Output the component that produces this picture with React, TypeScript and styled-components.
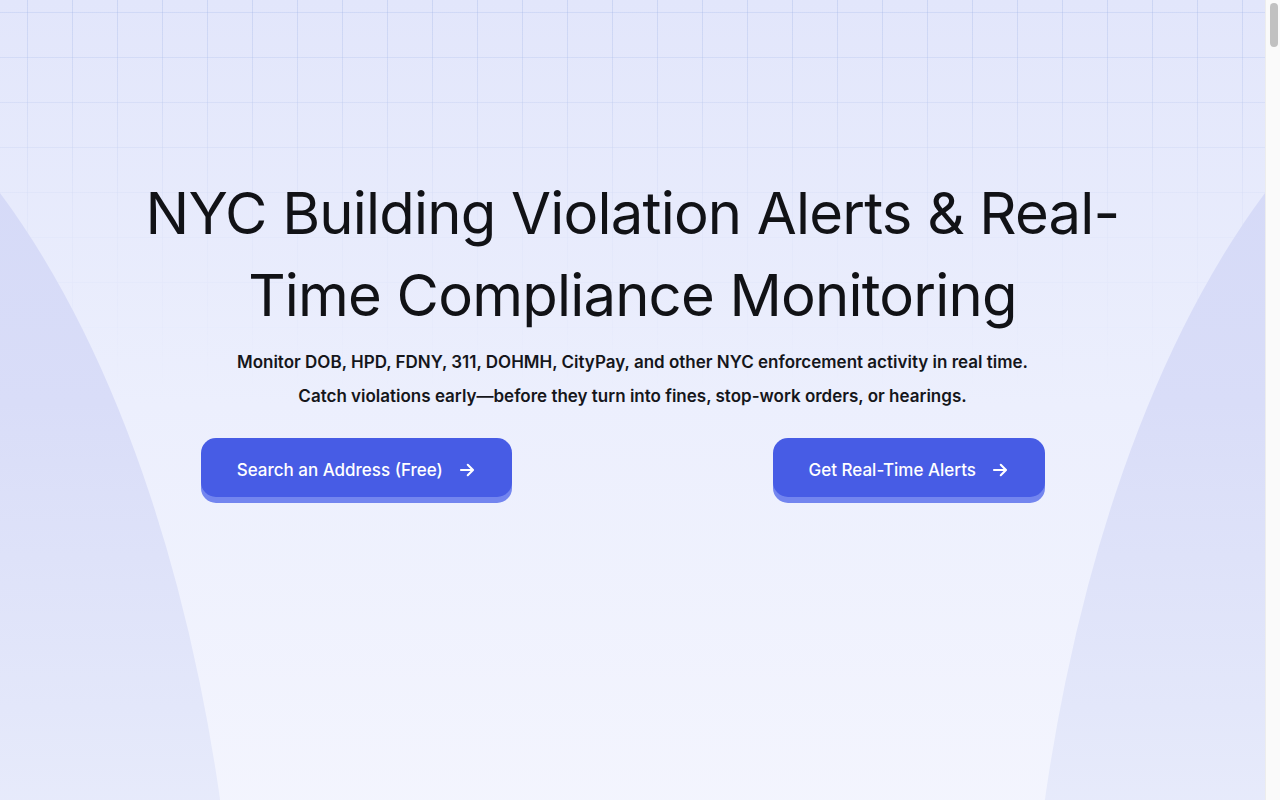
import React from 'react';
import styled, { createGlobalStyle } from 'styled-components';

const GlobalStyle = createGlobalStyle`
  html, body {
    margin: 0;
    padding: 0;
    height: 100%;
    overflow: hidden;
  }
  body {
    font-family: Inter, 'Liberation Sans', sans-serif;
    background: #f5f6fe;
    color: #111216;
  }
  * {
    box-sizing: border-box;
  }
`;

const ArrowIcon = () => (
  <svg width="18" height="18" viewBox="0 0 24 24" fill="none" stroke="currentColor" strokeWidth="2.8" strokeLinecap="round" strokeLinejoin="round">
    <path d="M4 12h15" />
    <path d="M13 5l7 7-7 7" />
  </svg>
);

export default function App() {
  return (
    <>
      <GlobalStyle />
      <Frame>
        <Page>
          <Hero>
            <GridLines />
            <Arc side="left" />
            <Arc side="right" />
            <HeroContent>
              <Title>
                NYC Building Violation Alerts &amp; Real-
                <br />
                Time Compliance Monitoring
              </Title>
              <Subtitle>
                Monitor DOB, HPD, FDNY, 311, DOHMH, CityPay, and other NYC enforcement activity in real time.
                <br />
                Catch violations early—before they turn into fines, stop-work orders, or hearings.
              </Subtitle>
              <Actions>
                <CtaButton>
                  Search an Address (Free)
                  <ArrowIcon />
                </CtaButton>
                <CtaButton>
                  Get Real-Time Alerts
                  <ArrowIcon />
                </CtaButton>
              </Actions>
            </HeroContent>
          </Hero>
        </Page>
        <ScrollTrack>
          <ScrollThumb />
        </ScrollTrack>
      </Frame>
    </>
  );
}

const Frame = styled.div`
  display: flex;
  width: 100vw;
  height: 100vh;
  overflow: hidden;
`;

const Page = styled.main`
  flex: 1;
  min-width: 0;
  height: 100%;
  overflow: hidden;
`;

// stands in for the browser's vertical scrollbar seen in the screenshot
const ScrollTrack = styled.div`
  flex: none;
  width: 15px;
  height: 100%;
  padding: 3px 3px 0 4px;
  background: #fafafa;
  border-left: 1px solid #ededed;
`;

const ScrollThumb = styled.div`
  width: 8px;
  height: 44px;
  border-radius: 4px;
  background: #c1c1c1;
`;

const Hero = styled.section`
  position: relative;
  overflow: hidden;
  min-height: 900px;
  background: linear-gradient(180deg, #e2e6fb 0%, #eceffd 45%, #f5f6fe 100%);
`;

const GridLines = styled.div`
  position: absolute;
  inset: 0 0 auto 0;
  height: 420px;
  pointer-events: none;
  background-image:
    linear-gradient(to right, rgba(165, 184, 232, 0.36) 1px, transparent 1px),
    linear-gradient(to bottom, rgba(165, 184, 232, 0.3) 1px, transparent 1px);
  background-size: 45px 45px;
  background-position: 27px 12px;
  -webkit-mask-image: linear-gradient(to bottom, #000 0, rgba(0, 0, 0, 0.7) 100px, rgba(0, 0, 0, 0.2) 220px, transparent 400px);
  mask-image: linear-gradient(to bottom, #000 0, rgba(0, 0, 0, 0.7) 100px, rgba(0, 0, 0, 0.2) 220px, transparent 400px);
`;

const Arc = styled.div<{ side: 'left' | 'right' }>`
  position: absolute;
  top: 10px;
  ${(p) => (p.side === 'left' ? 'left: -841px;' : 'right: -841px;')}
  width: 1082px;
  height: 2180px;
  border-radius: 50%;
  pointer-events: none;
  background: linear-gradient(180deg, #d3d8f7 0%, #d9ddf8 18%, #e3e7fa 32%, #eef1fd 45%);
`;

const HeroContent = styled.div`
  position: relative;
  z-index: 1;
  display: flex;
  flex-direction: column;
  align-items: center;
  padding: 172px 80px 0;
`;

const Title = styled.h1`
  margin: 0;
  font-family: Inter, 'Liberation Sans', sans-serif;
  font-weight: 400;
  font-size: 58px;
  line-height: 82px;
  letter-spacing: -0.8px;
  text-align: center;
  color: #111216;
`;

const Subtitle = styled.p`
  margin: 9px 0 0;
  font-family: Inter, 'Liberation Sans', sans-serif;
  font-weight: 600;
  font-size: 17px;
  line-height: 34px;
  letter-spacing: 0;
  text-align: center;
  color: #15161b;
`;

const Actions = styled.div`
  width: 100%;
  display: grid;
  grid-template-columns: 1fr 1fr;
  justify-items: center;
  margin-top: 25px;
`;

const CtaButton = styled.button`
  display: inline-flex;
  align-items: center;
  gap: 15px;
  height: 59px;
  padding: 5px 36px 0;
  border: none;
  border-radius: 15px;
  background: #475ce5;
  box-shadow: 0 6px 0 #7385ef;
  color: #ffffff;
  font-family: Inter, 'Liberation Sans', sans-serif;
  font-weight: 500;
  font-size: 17px;
  letter-spacing: 0;
  cursor: pointer;

  svg {
    flex: none;
  }
`;
